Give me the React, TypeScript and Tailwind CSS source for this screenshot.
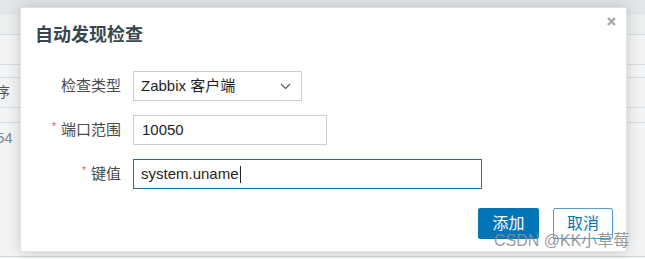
import React from "react";

const font = { fontFamily: '"Liberation Sans", "Noto Sans CJK SC", sans-serif' };

function Label({ text, required }: { text: string; required?: boolean }) {
  return (
    <div className="flex h-[30px] items-center justify-end text-[15px] text-[#4a4a4a]">
      {required && <span className="mr-[5px] -mt-[6px] text-[10px] leading-none text-[#e45959]">*</span>}
      <span>{text}</span>
    </div>
  );
}

export default function App() {
  return (
    <div className="relative h-[259px] w-[645px] overflow-hidden bg-[#f1f3f4]" style={font}>
      {/* background page */}
      <div className="flex h-full flex-col">
        <div className="h-[15px] bg-[#e3e6e8]" />
        <div className="h-[20px] border-b border-[#d8dcdf] bg-[#eceff0]" />
        <div className="h-[30px] border-b border-[#d8dcdf]" />
        <div className="h-[13px] border-b border-[#d8dcdf]" />
        <div className="flex h-[30px] items-center border-b border-[#d8dcdf] text-[14px] text-[#555]">
          <span className="-ml-[4px]">序</span>
        </div>
        <div className="h-[15px] border-b border-[#d8dcdf]" />
        <div className="flex h-[30px] items-center text-[15px] text-[#7c8a99]">
          <span className="-ml-[4px]">54</span>
        </div>
        <div className="flex-1" />
        <div className="h-[3px] border-t border-[#d0d4d7] bg-[#f7f8f8]" />
      </div>

      {/* dialog */}
      <div className="absolute left-[20px] top-[7px] flex h-[245px] w-[607px] flex-col border border-[#dfe3e6] bg-white shadow-[0_0_12px_rgba(0,0,0,0.18)]">
        <div className="relative">
          <div className="pl-[14px] pt-[15px] text-[18px] font-bold leading-[24px] text-[#37474f]">自动发现检查</div>
          <svg className="absolute right-[10px] top-[9px]" width="9" height="9" viewBox="0 0 9 9">
            <path d="M1 1 L8 8 M8 1 L1 8" stroke="#a6a6a6" strokeWidth="2.4" />
          </svg>
        </div>

        <div className="mt-[24px] grid grid-cols-[100px_auto] gap-x-[12px] gap-y-[14px]">
          <Label text="检查类型" />
          <div className="flex h-[30px] w-[169px] items-center justify-between border border-[#c8ced2] pl-[7px] pr-[10px] text-[15px] text-[#1f1f1f]">
            <span>Zabbix 客户端</span>
            <svg width="11" height="7" viewBox="0 0 11 7">
              <path d="M1 1 L5.5 5.5 L10 1" fill="none" stroke="#555" strokeWidth="1.1" />
            </svg>
          </div>

          <Label text="端口范围" required />
          <div className="flex h-[30px] w-[194px] items-center border border-[#c8ced2] pl-[8px] text-[15px] text-[#1f1f1f]">
            10050
          </div>

          <Label text="键值" required />
          <div className="flex h-[30px] w-[349px] items-center border border-[#1f6fa8] pl-[7px] text-[15px] text-[#1f1f1f]">
            <span>system.uname</span>
            <span className="ml-[1px] h-[17px] w-px bg-[#222]" />
          </div>
        </div>

        <div className="mt-auto mb-[12px] flex justify-end gap-[14px] pr-[13px]">
          <div className="flex h-[31px] w-[61px] items-center justify-center rounded-[2px] bg-[#0275b8] text-[16px] text-white">添加</div>
          <div className="flex h-[31px] w-[60px] items-center justify-center rounded-[2px] border border-[#4c9ed6] bg-white text-[16px] text-[#0275b8]">取消</div>
        </div>
      </div>

      {/* watermark */}
      <div className="pointer-events-none absolute left-[494px] top-[231px] text-[16px] leading-[20px] text-[#8c8c8c]/90">
        CSDN @KK小草莓
      </div>
    </div>
  );
}
